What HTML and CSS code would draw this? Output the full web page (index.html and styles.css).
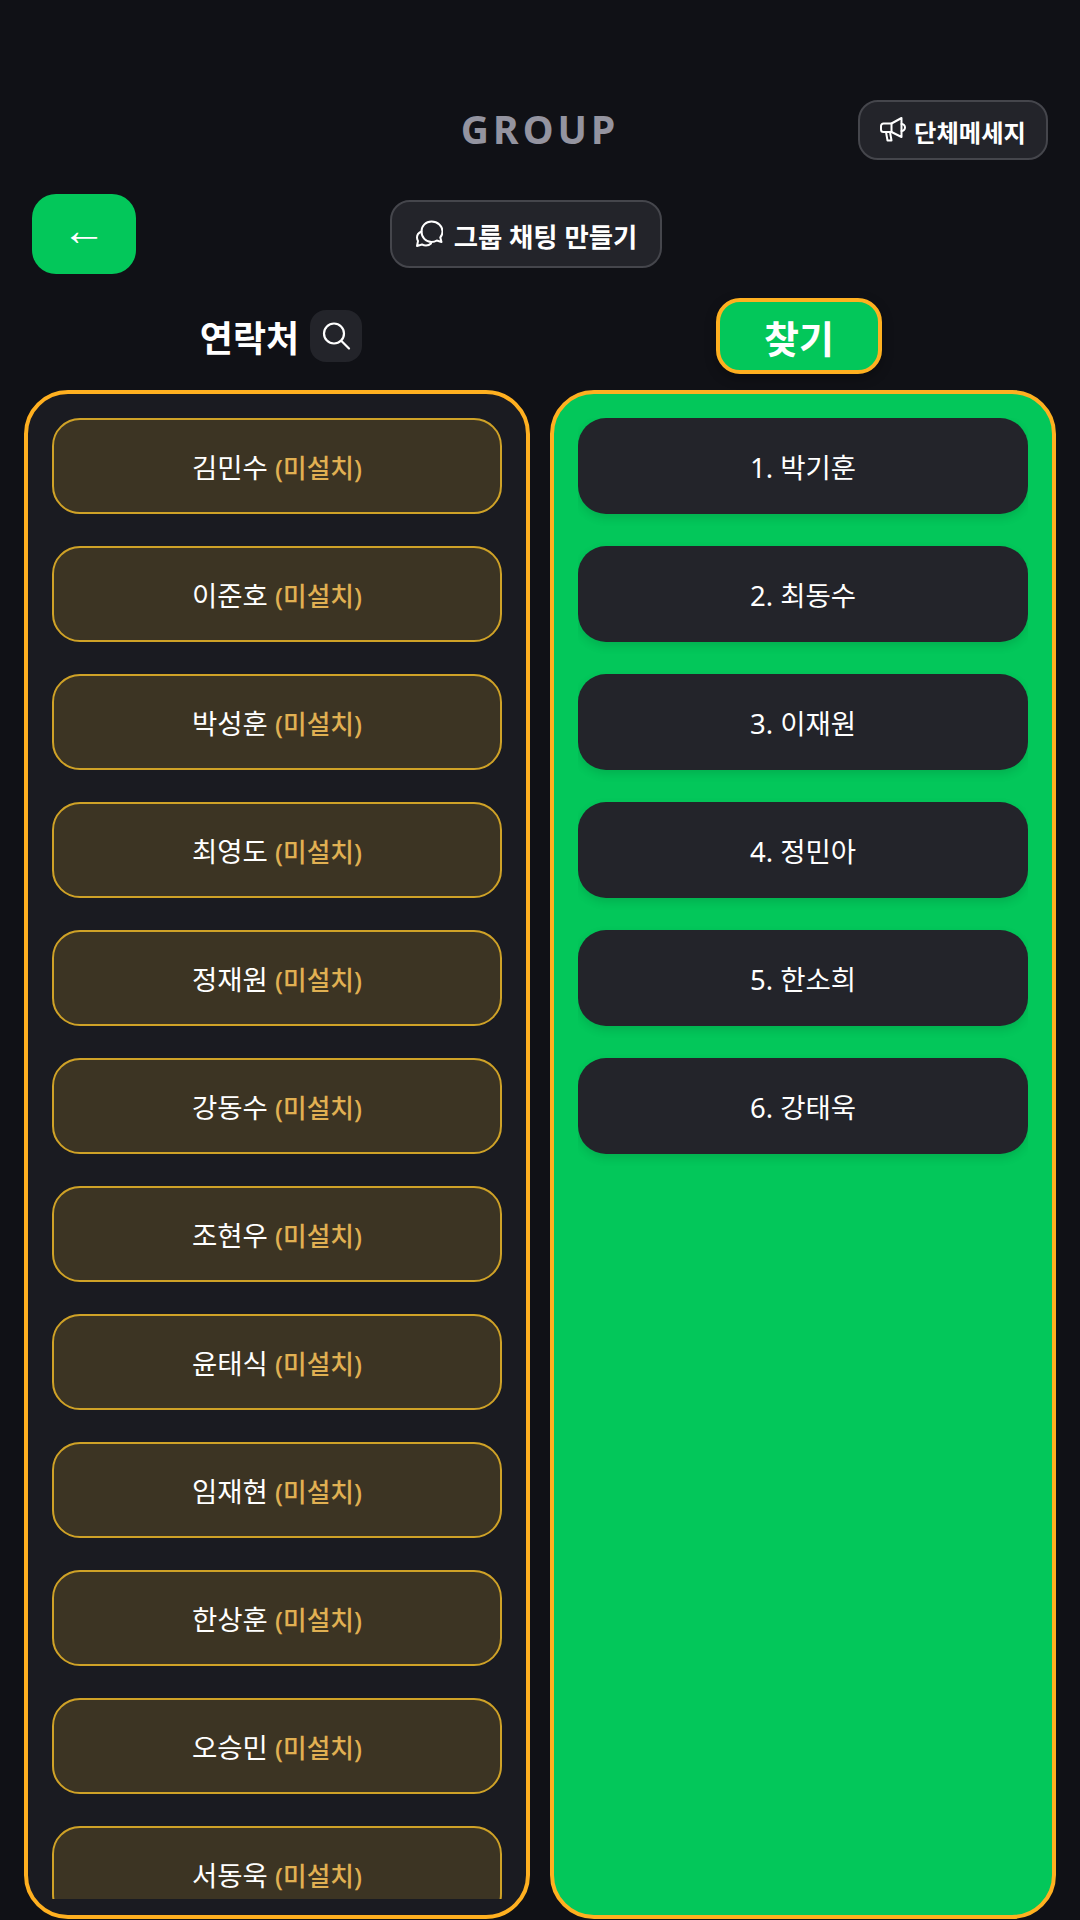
FILE: index.html
```html
<!DOCTYPE html>
<html>
<head>
  <title>Group</title>
  <link rel="stylesheet" href="styles.css">
</head>
<body>
  <div class="top-bar">
    <div class="title">GROUP</div>
    <button class="dark-btn notice-btn">
      <svg class="icon" width="28" height="28" viewBox="0 0 28 28" fill="none" stroke="#fff" stroke-width="2" stroke-linejoin="round" stroke-linecap="round">
        <path d="M3.500 7.500h8L21.500 2v19l-10-5h-8A2.500 2.500 0 0 1 1 13.500V10a2.500 2.500 0 0 1 2.500-2.500z"/>
        <path d="M11.500 7.500V16"/>
        <path d="M6 16l1.500 8.500h4L10 16"/>
        <path d="M21.500 8a3.500 3.500 0 0 1 0 7"/>
      </svg>
      <span class="btn-text">단체메세지</span>
    </button>
  </div>

  <div class="action-bar">
    <button class="back-btn">←</button>
    <button class="dark-btn chat-btn">
      <svg class="icon" width="28" height="28" viewBox="0 0 28 28" fill="none" stroke="#fff" stroke-width="2" stroke-linejoin="round" stroke-linecap="round">
        <path d="M16.500 1.500c-5.800 0-10 4.400-10 10s4.200 10.500 10 10.500c2 0 3.800-.5 5.300-1.500l4.700 1.500-1.200-4.500c1.400-1.700 2.200-3.700 2.200-6 0-5.600-4.700-10-11-10z"/>
        <path d="M6.500 11.500C4 12.500 2 14.800 2 17.500c0 1.300.4 2.400 1 3.500l-1 5 5-1.500c1.200.6 2.500 1 4 1 2 0 3.800-.8 5-2"/>
      </svg>
      <span class="btn-text">그룹 채팅 만들기</span>
    </button>
  </div>

  <div class="columns-head">
    <div class="contacts-head">
      <span>연락처</span>
      <button class="search-btn">
        <svg width="30" height="30" viewBox="0 0 30 30" fill="none" stroke="#fff" stroke-width="2.200" stroke-linecap="round">
          <circle cx="13" cy="12.500" r="10"/>
          <path d="M20.500 20l7.500 7.500"/>
        </svg>
      </button>
    </div>
    <div class="find-head">
      <button class="find-btn">찾기</button>
    </div>
  </div>

  <div class="columns">
    <!-- contacts -->
    <div class="panel contacts-panel">
      <div class="list">
        <div class="item contact">김민수 <span class="status">(미설치)</span></div>
        <div class="item contact">이준호 <span class="status">(미설치)</span></div>
        <div class="item contact">박성훈 <span class="status">(미설치)</span></div>
        <div class="item contact">최영도 <span class="status">(미설치)</span></div>
        <div class="item contact">정재원 <span class="status">(미설치)</span></div>
        <div class="item contact">강동수 <span class="status">(미설치)</span></div>
        <div class="item contact">조현우 <span class="status">(미설치)</span></div>
        <div class="item contact">윤태식 <span class="status">(미설치)</span></div>
        <div class="item contact">임재현 <span class="status">(미설치)</span></div>
        <div class="item contact">한상훈 <span class="status">(미설치)</span></div>
        <div class="item contact">오승민 <span class="status">(미설치)</span></div>
        <div class="item contact">서동욱 <span class="status">(미설치)</span></div>
      </div>
    </div>

    <!-- friends -->
    <div class="panel friends-panel">
      <div class="list">
        <div class="item friend">1. 박기훈</div>
        <div class="item friend">2. 최동수</div>
        <div class="item friend">3. 이재원</div>
        <div class="item friend">4. 정민아</div>
        <div class="item friend">5. 한소희</div>
        <div class="item friend">6. 강태욱</div>
      </div>
    </div>
  </div>
</body>
</html>
```

FILE: styles.css
```css
* {
  box-sizing: border-box;
}

html, body {
  height: 100%;
}

body {
  display: flex;
  flex-direction: column;
  height: 1920px;
  margin: 0;
  overflow: hidden;
  background-color: #101116;
  color: #fff;
  font-family: "Noto Sans", "Noto Sans CJK KR", sans-serif;
}

button {
  font-family: inherit;
  color: #fff;
  cursor: pointer;
}

.top-bar {
  display: grid;
  grid-template-columns: 1fr auto 1fr;
  align-items: center;
  height: 60px;
  margin-top: 100px;
  padding: 0 32px;
}

.title {
  grid-column: 2;
  margin-bottom: 4px;
  font-size: 39px;
  font-weight: 700;
  letter-spacing: 4px;
  color: #9494a0;
}

.dark-btn {
  display: flex;
  align-items: center;
  justify-content: center;
  background-color: #23242a;
  border: 2px solid #45464c;
  font-weight: 700;
}

.btn-text {
  padding-top: 3px;
}

.notice-btn {
  grid-column: 3;
  justify-self: end;
  gap: 6px;
  width: 190px;
  height: 60px;
  border-radius: 20px;
  font-size: 24.300px;
}

.action-bar {
  display: flex;
  align-items: flex-start;
  gap: 254px;
  height: 80px;
  margin-top: 34px;
  padding-left: 32px;
}

.back-btn {
  width: 104px;
  height: 80px;
  padding: 0 0 9px;
  border: none;
  border-radius: 24px;
  background-color: #03c75a;
  font-family: "Liberation Sans", sans-serif;
  font-size: 44px;
}

.chat-btn {
  gap: 11px;
  width: 272px;
  height: 68px;
  margin-top: 6px;
  border-radius: 20px;
  font-size: 26.400px;
}

.columns-head {
  display: grid;
  grid-template-columns: 1fr 1fr;
  height: 76px;
  margin-top: 24px;
  padding: 0 24px;
  column-gap: 20px;
}

.contacts-head {
  display: flex;
  align-items: center;
  justify-content: center;
  gap: 11px;
  padding-left: 8px;
  font-size: 36px;
  font-weight: 700;
}

.search-btn {
  display: flex;
  align-items: center;
  justify-content: center;
  width: 52px;
  height: 52px;
  padding: 0;
  border: none;
  border-radius: 16px;
  background-color: #23242a;
}

.find-head {
  display: flex;
  justify-content: center;
  padding-right: 8px;
}

.find-btn {
  width: 166px;
  height: 76px;
  padding: 0;
  border: 4px solid #ffb020;
  border-radius: 24px;
  background-color: #03c75a;
  font-size: 38px;
  font-weight: 700;
  box-shadow: 0 4px 12px rgba(0, 0, 0, 0.3);
}

.columns {
  display: grid;
  grid-template-columns: 1fr 1fr;
  flex: 1;
  min-height: 0;
  margin-top: 16px;
  padding: 0 24px 1px;
  column-gap: 20px;
}

.panel {
  min-height: 0;
  padding: 24px 24px 16px;
  border: 4px solid #ffb020;
  border-radius: 44px;
}

.contacts-panel {
  background-color: #1a1b21;
}

.friends-panel {
  background-color: #03c75a;
}

.list {
  display: flex;
  flex-direction: column;
  gap: 32px;
  height: 100%;
  overflow: hidden;
}

.item {
  display: flex;
  align-items: center;
  justify-content: center;
  flex-shrink: 0;
  height: 96px;
  border-radius: 28px;
  font-size: 27.500px;
  white-space: pre;
}

.contact {
  background-color: #3c3423;
  border: 2px solid #cfa227;
}

.status {
  padding-top: 1px;
  color: #e0b052;
  font-size: 25.700px;
  font-weight: 500;
}

.friend {
  background-color: #23242a;
  box-shadow: 0 4px 10px rgba(0, 0, 0, 0.12);
}
```
